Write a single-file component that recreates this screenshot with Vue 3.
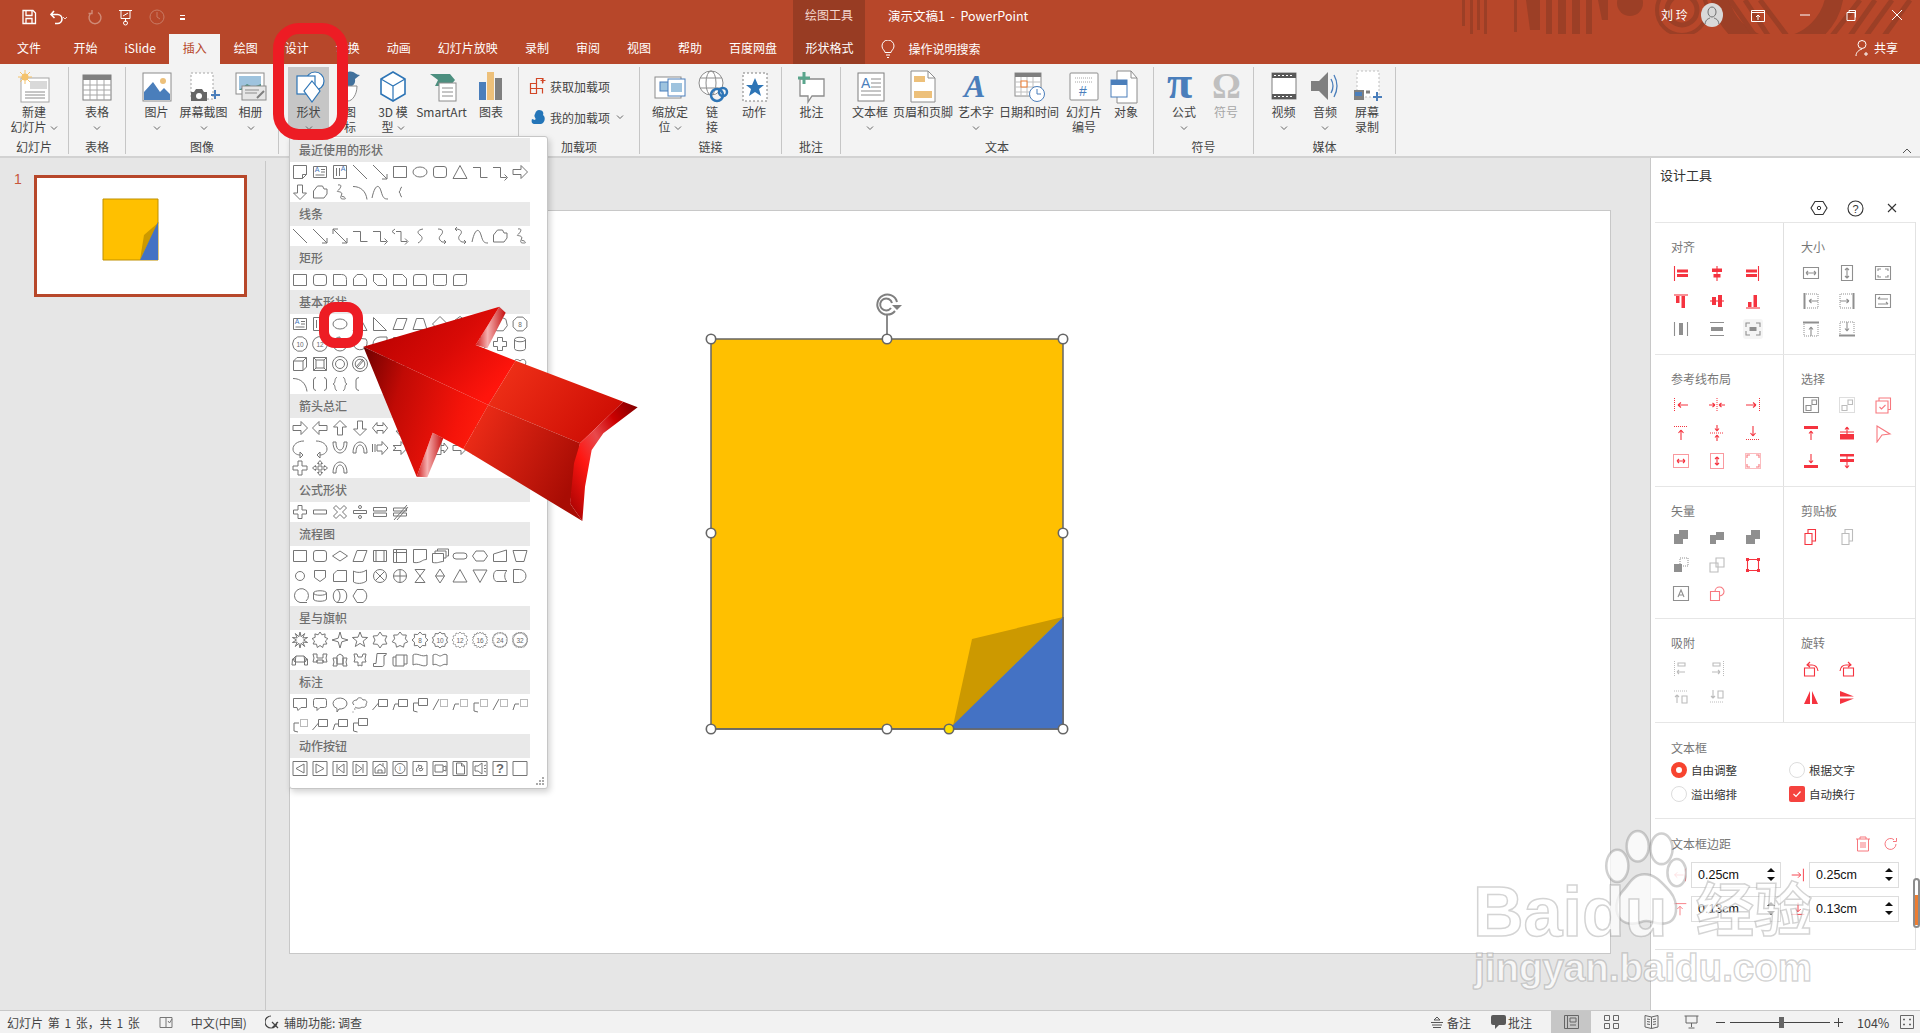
<script setup>
// regular polygon / star paths for the shape gallery
const poly = (n, rx = 7.5, ry = 7.5, rot = -90) => {
  let p = []
  for (let i = 0; i < n; i++) {
    const a = ((rot + (360 / n) * i) * Math.PI) / 180
    p.push((10 + rx * Math.cos(a)).toFixed(1) + ' ' + (10 + ry * Math.sin(a)).toFixed(1))
  }
  return 'M' + p.join('L') + 'z'
}
const star = (n, r = 4.5, R = 8) => {
  let p = []
  for (let i = 0; i < n * 2; i++) {
    const a = ((-90 + (180 / n) * i) * Math.PI) / 180
    const q = i % 2 ? r : R
    p.push((10 + q * Math.cos(a)).toFixed(1) + ' ' + (10 + q * Math.sin(a)).toFixed(1))
  }
  return 'M' + p.join('L') + 'z'
}
const ell = (rx, ry, cx = 10, cy = 10) => `M${cx - rx} ${cy}a${rx} ${ry} 0 1 0 ${rx * 2} 0a${rx} ${ry} 0 1 0 ${-rx * 2} 0z`

const S = {
  rect: 'M3.5 4.5h13v11h-13z',
  note: 'M3.5 3.5h13v9l-4 4h-9zM16.5 12.5h-4v4',
  tb: 'M3.5 4.5h13v11h-13zM11 7.5h4M11 10h4M5.5 13h9',
  vt: 'M3.5 3.5h13v13h-13zM6.5 6v8M9.5 6v8',
  line: 'M3 3l14 14',
  arr: 'M3 3l14 14m-5 0h5v-5',
  dbl: 'M3 3l14 14m-5 0h5v-5M3 8V3h5',
  elbow: 'M3 5.5h7.5v10h7',
  elbowA: 'M3 5.5h7.5v10h6m-2-3l3 3-3 3',
  elbowD: 'M6 5.5h5v10h6m-2-3l3 3-3 3M5 3L2 5.5 5 8',
  oval: ell(7, 5),
  round: 'M6 4.5h8q2.5 0 2.5 2.5v6q0 2.5-2.5 2.5H6q-2.5 0-2.5-2.5V7q0-2.5 2.5-2.5z',
  tri: 'M10 3.5l7 13H3z',
  aR: 'M3 7.5h8V3.5l6.5 6.5-6.5 6.5v-4H3z',
  aL: 'M17 7.5H9V3.5L2.5 10 9 16.5v-4h8z',
  aU: 'M7.5 17V9H3.5L10 2.5 16.5 9h-4v8z',
  aD: 'M7.5 3v8H3.5l6.5 6.5 6.5-6.5h-4V3z',
  free: 'M3.5 16V9l4-5h5l1.5 3h3v5l-3 4z',
  scrib: 'M8 3c6-1 1 5-.5 6s6 0 4 4 0 4 3 4-2-4-3-2',
  arc: 'M3 4.5c8 0 13 5 14 13',
  curve: 'M2 16C5 2 9 2 11 9s3 8 7 8',
  brace: 'M12 5c-2 0-1 4-3 5 2 1 1 5 3 5',
  sc: 'M13 3C7 4 7 7 10 9s3 5-2 8',
  sca: 'M8 3c6 0 5 4 3 6s-3 4 1 7h4m-2-2l2 2-2 2',
  scd: 'M7 1L5 3l2 2M5 3c8 0 7 4 5 6s-2 5 2 7h4m-2-2l2 2-2 2',
  r3: 'M3.5 4.5h8q5 0 5 5v6h-13z',
  r4: 'M7 4.5h6l3.5 4v7h-13v-7z',
  r5: 'M3.5 4.5h9l4 4v7h-9l-4-4z',
  r6: 'M3.5 4.5h9l4 4v7h-13z',
  r7: 'M6 4.5h8q2.5 0 2.5 2.5v8.5h-13V7q0-2.5 2.5-2.5z',
  r8: 'M3.5 4.5h13v9q0 2-2 2h-9q-2 0-2-2z',
  r9: 'M6 4.5h10.5v8q0 3-3 3H3.5V7q0-2.5 2.5-2.5z',
  rtri: 'M3.5 3.5l13 13h-13z',
  para: 'M7 4.5h10l-4 11H3z',
  trap: 'M6.5 4.5h7l3.5 11H3z',
  dia: 'M10 2.5l7.5 7.5-7.5 7.5L2.5 10z',
  pie: 'M10 10V3a7 7 0 1 0 7 7z',
  chord: 'M5 4a7 7 0 1 0 11 1z',
  tear: 'M17 3v7a7 7 0 1 1-7-7z',
  frame: 'M3.5 3.5h13v13h-13zM6 6h8v8H6z',
  half: 'M3.5 3.5h13l-3 3h-7v7l-3 3z',
  lshape: 'M3.5 3.5h5v8h8v5h-13z',
  plus: 'M7.5 3.5h5v4h4v5h-4v4h-5v-4h-4v-5h4z',
  plaque: 'M7 3.5h6q0 3 3.5 3.5v6q-3.5 0-3.5 3.5H7q0-3.5-3.5-3.5V7Q7 7 7 3.5z',
  can: 'M4.5 5.5c0-3 11-3 11 0v9c0 3-11 3-11 0zM4.5 5.5c0 3 11 3 11 0',
  cube: 'M3.5 7l3.5-3.5h9.5V13L13 16.5H3.5zM3.5 7H13v9.5M13 7l3.5-3.5',
  bevel: 'M3.5 3.5h13v13h-13zM6 6h8v8H6zM3.5 3.5L6 6M16.5 3.5L14 6M3.5 16.5L6 14M16.5 16.5L14 14',
  donut: ell(7.5, 7.5) + ell(4.5, 4.5),
  no: ell(7.5, 7.5) + ell(4.8, 4.8) + 'M7 14l7-8M6 13l7-8',
  brk: 'M6 3.5Q3.5 4 3.5 6v8q0 2 2.5 2.5M14 3.5q2.5.5 2.5 2.5v8q0 2-2.5 2.5',
  brc: 'M7 3.5c-3 0-1 6-4 6.5 3 .5 1 6.5 4 6.5M13 3.5c3 0 1 6 4 6.5-3 .5-1 6.5-4 6.5',
  lbrk: 'M9 3.5Q6 4 6 6v8q0 2 3 2.5',
  heart: 'M10 17C0 10 5 2 10 7c5-5 10 3 0 10z',
  aLR: 'M2.5 10L7 4.5v3h6v-3l4.5 5.5-4.5 5.5v-3H7v3z',
  aUD: 'M10 2.5l4 4.5h-2.5v6H14l-4 4.5L6 13h2.5V7H6z',
  aQuad: 'M10 2.5l2.5 3H11V9h3.500V7.500l3 2.500-3 2.500V11H11v3.500h1.500l-2.500 3-2.500-3H9V11H5.500v1.500l-3-2.500 3-2.500V9H9V5.500H7.500z',
  aCross: 'M8 3h4v5h5v4h-5v5H8v-5H3V8h5z',
  aCrn: 'M4 10a6 6 0 0 1 12 0M16 10l-3-1M16 10l1-3M4 10v6h3v-6a3 3 0 0 1 6 0',
  aCurL: 'M14 3c-7 0-11 4-11 8s4 6 7 6M10 14v6l3-3z',
  aCurR: 'M6 3c7 0 11 4 11 8s-4 6-7 6M10 14v6l-3-3z',
  aUT: 'M3 4c0 8 4 11 7 11s7-3 7-11h-3c0 6-2 8-4 8S6 10 6 4z',
  aUTd: 'M3 15c0-8 4-11 7-11s7 3 7 11h-3c0-6-2-8-4-8s-4 2-4 8z',
  aStr: 'M2.5 6v8M5 6v8M7 7h5V3.500l6 6.500-6 6.500V13H7z',
  aNot: 'M3 7.500h8V3.500l6.500 6.500-6.500 6.500v-4H3l3-2.500z',
  aPen: 'M3.500 4.500h8l5 5.500-5 5.500h-8z',
  aBox: 'M3 3.500h8v13H3zM11 7.500h3V5l4 5-4 5v-2.500h-3',
  mPlus: 'M8 3.500h4V8h4.500v4H12v4.500H8V12H3.500V8H8z',
  mMin: 'M3.500 8h13v4h-13z',
  mMul: 'M6 3.500l4 4 4-4 2.500 2.500-4 4 4 4L14 16.500l-4-4-4 4L3.500 14l4-4-4-4z',
  mDiv: 'M3.500 8.500h13v3h-13z' + ell(1.5, 1.5, 10, 5) + ell(1.5, 1.5, 10, 15),
  mEq: 'M3.500 5.500h13v3.500h-13zM3.500 11h13v3.500h-13z',
  mNe: 'M3.500 6h13v3h-13zM3.500 11h13v3h-13zM4 18L17 3M7 18L18 5',
  fDec: 'M2.500 10L10 5l7.500 5-7.500 5z',
  fPre: 'M3.500 4.500h13v11h-13zM6 4.500v11M14 4.500v11',
  fInt: 'M3.500 3.500h13v13h-13zM3.500 6.500h13M6.500 3.500v13',
  fDoc: 'M3.500 3.500h13v10c-5 0-5 4-13 3z',
  fMul: 'M2.500 7.500h11v8c-4 0-5 2-11 1zM5 7.500V5h11v7h-2.500M7.500 5V3h11v7h-2',
  fTerm: 'M6 7h8a3 3 0 0 1 0 6H6a3 3 0 0 1 0-6z',
  fPrep: 'M6 5h8l3.500 5-3.500 5H6l-3.500-5z',
  fMan: 'M3.500 8l13-4v11.500h-13z',
  fOp: 'M3 4.500h14l-3 11H6z',
  fOff: 'M4.500 4.500h11v7L10 15.500l-5.500-4z',
  fCard: 'M7 4.500h9.500v11h-13V8z',
  fTape: 'M3.500 5c3 2 9 2 13-1v11c-4 3-10 3-13 1z',
  fSum: ell(6.5, 6.5) + 'M5.500 5.500l9 9M14.500 5.500l-9 9',
  fOr: ell(6.5, 6.5) + 'M10 3.500v13M3.500 10h13',
  fCol: 'M5 3.500h10L5 16.500h10z',
  fSort: 'M10 3l4.500 7-4.500 7-4.500-7zM5.500 10h9',
  fTri: 'M10 3.500l7 12.500H3z',
  fInv: 'M3 4l7 12.500L17 4z',
  fSto: 'M6.500 4.500H17c-3 2-3 9 0 11H6.500c-4-1-4-10 0-11z',
  fDel: 'M3.500 3.500h6a6.500 6.500 0 0 1 0 13h-6z',
  fSeq: 'M16 15a7 7 0 1 0-6 1.500h7',
  fDisk: 'M3.500 7c0-3 13-3 13 0v6c0 3-13 3-13 0zM3.500 7c0 3 13 3 13 0',
  fDir: 'M7 3.500c-5 2-5 11 0 13h6c5-2 5-11 0-13zM7 3.500c4 2 4 11 0 13',
  fDisp: 'M7 3.500h6c5 3 5 10 0 13H7L3 10z',
  rib1: 'M6 6h8l1 6H5zM6 6L3 9l2 3M14 6l3 3-2 3M2.500 9h3v6H2zM14.500 9h3v6h-3z',
  rib2: 'M3 4h4v4h6V4h4l-1 4 1 4h-4v-2H7v2H3l1-4zM7 10v3h6v-3',
  rib3: 'M7 6l3-2 3 2v8H7zM3 8h4v8H3l1-4zM13 8h4l-1 4 1 4h-4z',
  rib4: 'M4 4h3l1 3h4l1-3h3l-1 5 1 3h-4v4l-2-1-2 1v-4H4l1-3z',
  scr1: 'M7 3.500h9.500l-1 2H14v9c0 2-2 2-2 2H3.500v-3H6z',
  scr2: 'M3 7h3V5h11v9h-3v2H4q-1 0-1-2zM6 7v9M14 5v9',
  wave: 'M3 5c4-3 9 3 14 0v10c-4 3-9-3-14 0z',
  dwave: 'M3 5c4-2 5 1 7 1s4-3 7-1v10c-3-2-5 1-7 1s-4-3-7-1z',
  c1: 'M3.500 4.500h13v9H11l-3 3-1-3H3.500z',
  c2: 'M5.500 4.500h9q2 0 2 2v5q0 2-2 2H10l-3 3v-3H5.500q-2 0-2-2v-5q0-2 2-2z',
  c3: 'M3 9.500a7 5.500 0 1 1 6 5.500l-2 3v-3.500Q3 13 3 9.500z',
  c4: 'M4 11c-3-3 0-5 3-5 0-3 5-3 6 0 3-1 5 2 3 4 1 3-3 4-4 3-2 2-6 1-7 0M4 15h1.500M2.500 18h1',
  cl1: 'M8.500 5.500h9v7h-9zM8.500 9L2.500 16',
  cl2: 'M8.500 5.500h9v7h-9zM8.500 10H5L3 16',
  cl3: 'M8.500 4.500h9v7h-9zM8.500 9H3.500v8l4 1',
  act: 'M3 3.500h14v14H3z',
}
const names = (str) => str.split(' ').map((k) => ({ d: S[k] }))
const gTB = { d: S.tb, t: 'A', c: '#3f74b8', tx: 7, ty: 10 }
const gVT = { d: S.vt, t: 'A', c: '#3f74b8', tx: 13, ty: 9 }
const numOct = (n, t) => ({ d: poly(n, 7.5, 7.5, -90 + 180 / n), t })
const dotBox = 'M10.500 5.500h7v7h-7z'
const sec = [
  { h: '最近使用的形状', items: [{ d: S.note }, gTB, gVT, ...names('line arr rect oval round tri elbow elbowA aR aD free scrib arc curve brace')] },
  { h: '线条', items: names('line arr dbl elbow elbowA elbowD sc sca scd curve free scrib') },
  { h: '矩形', items: names('rect round r3 r4 r5 r6 r7 r8 r9') },
  { h: '基本形状', items: [gTB, gVT, ...names('oval tri rtri para trap dia'), { d: poly(5) }, { d: poly(6, 7.5, 6.5, 0) }, { d: poly(7) }, numOct(8, '8'), numOct(10, '10'), numOct(12, '12'), ...names('pie chord tear frame half lshape rect plaque plus can cube bevel donut no tear plus rect oval round arc free heart arc brk brc lbrk brace brk brc')] },
  { h: '箭头总汇', items: names('aR aL aU aD aLR aUD aQuad aCross aCrn aUT aStr aNot aCurL aCurR aUT aUTd aStr aNot aPen aBox aR aBox aCross aQuad aCross aQuad aUTd') },
  { h: '公式形状', items: names('mPlus mMin mMul mDiv mEq mNe') },
  { h: '流程图', items: names('rect round fDec para fPre fInt fDoc fMul fTerm fPrep fMan fOp').concat([{ d: ell(4.5, 4.5) }], names('fOff fCard fTape fSum fOr fCol fSort fTri fInv fSto fDel fSeq fDisk fDir fDisp')) },
  { h: '星与旗帜', items: [{ d: star(10, 3.5, 8) }, { d: star(9, 5.5, 8) }, { d: star(4, 2.5, 8) }, { d: star(5, 3.4, 8) }, { d: star(6, 5, 8) }, { d: star(7, 5.5, 8) }, { d: star(8, 6, 8), t: '8' }, { d: star(10, 6.5, 8), t: '10' }, { d: star(12, 6.5, 8), t: '12', dash: 1 }, { d: star(16, 6.5, 8), t: '16', dash: 1 }, { d: star(24, 6.5, 8), t: '24', dash: 1 }, { d: star(32, 6.5, 8), t: '32', dash: 1 }, ...names('rib1 rib2 rib3 rib4 scr1 scr2 wave dwave')] },
  { h: '标注', items: [...names('c1 c2 c3 c4 cl1 cl2 cl3'), { d: 'M3 16L9 5', e: dotBox }, { d: 'M3 16l2-6h4', e: dotBox }, { d: 'M9 9H4v8l4 1', e: dotBox }, { d: 'M3 16L9 5', e: dotBox }, { d: 'M3 16l2-6h4', e: dotBox }, { d: 'M9 9H4v8l4 1', e: dotBox }, ...names('cl1 cl2 cl3')] },
  { h: '动作按钮', items: [{ d: S.act + 'M14 6l-8 4.500 8 4.500z' }, { d: S.act + 'M6 6l8 4.500L6 15z' }, { d: S.act + 'M14 6l-6 4.500 6 4.500zM7 6v9' }, { d: S.act + 'M6 6l6 4.500L6 15zM13 6v9' }, { d: S.act + 'M5 15v-5l5-4 5 4v5zM8 15v-3h4v3M13 5v3' }, { d: S.act + ell(5, 5, 10, 10.5), t: 'i' }, { d: S.act + 'M7 14q-2-4 2-5l-1-2 4 1-1 3-1-1q-2 1 0 3 3 0 3-3' }, { d: S.act + 'M5 7h8v7H5zM13 9l3-1v5l-3-1' }, { d: S.act + 'M6.500 5h5l3 3v8h-8zM11.500 5v3h3' }, { d: S.act + 'M5 8h3l4-3v11l-4-3H5zM14 8l2-1M14 10.500h2M14 13l2 1' }, { d: S.act, t: '?', big: 1 }, { d: S.act }] },
]

// ribbon icons, drawn in a 36x32 box
const blue = '#4a7ebb', tan = '#edc07a'
const icons = {
  newSlide: `<rect x="5" y="8" width="28" height="24" fill="#fff" stroke="#a6a6a6"/><rect x="14" y="11" width="17" height="8" fill="#d9d9d9"/><path d="M9 22h20M9 25h20M9 28h20" stroke="#8c8c8c"/><circle cx="9" cy="7" r="3.500" fill="#f4c26b"/><path d="M9 0v14M2 7h14M4 2l10 10M14 2L4 12" stroke="#f4c26b"/>`,
  table: `<rect x="4" y="5" width="28" height="25" fill="#fff" stroke="#7f7f7f"/><rect x="4" y="5" width="28" height="5" fill="#7f7f7f"/><path d="M4 15h28M4 20h28M4 25h28M11 10v20M18 10v20M25 10v20" stroke="#a6a6a6"/>`,
  pic: `<rect x="4" y="3" width="28" height="28" fill="#fff" stroke="#8c8c8c"/><circle cx="24" cy="11" r="3" fill="${tan}"/><path d="M5 30V22l9-10 7 10 4-4 6 6v6z" fill="${blue}"/>`,
  shot: `<rect x="5" y="3" width="22" height="26" fill="#fff" stroke="#a6a6a6" stroke-dasharray="2 2"/><path d="M5 22h3l2-3h6l2 3h3v9H5z" fill="#666"/><circle cx="13" cy="26" r="3" fill="#fff"/><path d="M29 20v9M25 25h9" stroke="${blue}" stroke-width="2"/>`,
  album: `<rect x="3" y="3" width="28" height="21" fill="#fff" stroke="#8c8c8c"/><path d="M6 6h22v14H6z" fill="#9ec3de"/><path d="M6 20l8-6 6 3 8-3v6z" fill="#4c8f7f"/><rect x="9" y="16" width="24" height="14" fill="#e6e6e6" stroke="#8c8c8c"/><path d="M12 20h14M12 23h12" stroke="#8c8c8c"/><path d="M24 28l7-7" stroke="#7f7f7f" stroke-width="2"/>`,
  shape: `<circle cx="24" cy="11" r="9" fill="#fff" stroke="#2e75b6" stroke-width="1.200"/><rect x="6" y="6" width="18" height="18" fill="#fff" stroke="#2e75b6" stroke-width="1.200"/><path d="M21 11l8 10-8 11-8-11z" fill="#fff" stroke="#2e75b6" stroke-width="1.200"/>`,
  iconset: `<path d="M16 2c6-2 7 3 12 3l-5 4c1 6-4 9-9 7-2-4 0-10 2-14z" fill="#41719c"/><path d="M9 16h16c0 9-5 15-9 15-5 0-7-8-7-15z" fill="#fff" stroke="#8c8c8c"/><path d="M15 20v10" stroke="#8c8c8c"/>`,
  model: `<path d="M18 2l12 7v15L18 31 6 24V9z" fill="#fff" stroke="#2e75b6" stroke-width="1.600"/><path d="M6 9l12 7 12-7M18 16v15" fill="none" stroke="#2e75b6" stroke-width="1.200"/>`,
  smart: `<path d="M6 4h20l5 6-5 6H11l3-6z" fill="#4c8f7f"/><rect x="15" y="13" width="17" height="18" fill="#fff" stroke="#8c8c8c"/><path d="M18 18h11M18 22h11M18 26h11" stroke="#8c8c8c"/>`,
  chart: `<rect x="6" y="12" width="7" height="18" fill="#4a7ebb"/><rect x="14" y="2" width="7" height="28" fill="${tan}"/><rect x="22" y="8" width="7" height="22" fill="#7f7f7f"/>`,
  zoom: `<rect x="3" y="7" width="26" height="21" fill="#fff" stroke="#8c8c8c"/><rect x="8" y="12" width="9" height="9" fill="#9ec3de" stroke="${blue}"/><rect x="16" y="9" width="17" height="17" fill="#fff" stroke="${blue}"/><rect x="19" y="13" width="11" height="9" fill="#9ec3de"/>`,
  link: `<circle cx="17" cy="13" r="12" fill="#fff" stroke="#8c8c8c"/><ellipse cx="17" cy="13" rx="5" ry="12" fill="none" stroke="#8c8c8c"/><path d="M6 8h22M6 18h22" stroke="#8c8c8c"/><circle cx="23" cy="25" r="6" fill="none" stroke="#2e75b6" stroke-width="2.500"/><circle cx="29" cy="22" r="4" fill="none" stroke="#2e75b6" stroke-width="2.500"/>`,
  action: `<rect x="7" y="3" width="24" height="28" fill="#fff" stroke="#7f7f7f" stroke-dasharray="2 2"/><path d="M19 8l3 7h6l-5 4 2 7-6-4-6 4 2-7-5-4h6z" fill="#2e75b6"/>`,
  comment: `<path d="M6 9h24v17H18l-4 6v-6H6z" fill="#fff" stroke="#8c8c8c" stroke-width="1.300"/><path d="M10 2v12M4 8h12" stroke="#5aa58c" stroke-width="3"/>`,
  textbox: `<rect x="6" y="3" width="26" height="28" fill="#fff" stroke="#7f7f7f"/><text x="9" y="18" font-size="14" fill="${blue}" font-family="Liberation Sans">A</text><path d="M19 9h10M19 13h10M19 17h10M9 21h20M9 25h20" stroke="#8c8c8c"/>`,
  hf: `<path d="M6 1h17l7 7v24H6z" fill="#fff" stroke="#8c8c8c"/><path d="M23 1v7h7" fill="none" stroke="#8c8c8c"/><rect x="9" y="6" width="11" height="6" fill="${tan}"/><rect x="9" y="21" width="18" height="7" fill="${tan}"/>`,
  art: `<text x="6" y="27" font-size="32" font-style="italic" font-weight="700" fill="#4a7ebb" font-family="Liberation Serif">A</text>`,
  date: `<rect x="4" y="3" width="26" height="23" fill="#fff" stroke="#8c8c8c"/><rect x="4" y="3" width="26" height="4" fill="#7f7f7f"/><path d="M4 12h26M4 17h26M4 22h26M10 7v19M16 7v19M22 7v19" stroke="#bfbfbf"/><rect x="10" y="11" width="6" height="6" fill="#fff" stroke="#ed7d31"/><circle cx="26" cy="24" r="7.500" fill="#fff" stroke="${blue}"/><path d="M26 19v5h4" fill="none" stroke="${blue}"/>`,
  num: `<rect x="4" y="3" width="28" height="27" rx="1" fill="#fff" stroke="#8c8c8c"/><path d="M9 8h18M9 12h18" stroke="#a6a6a6" stroke-dasharray="1 1"/><text x="13" y="26" font-size="14" font-family="Liberation Sans" fill="${blue}">#</text>`,
  obj: `<path d="M9 1h14l6 7v25H9z" fill="#fff" stroke="#8c8c8c"/><path d="M23 1v7h6" fill="none" stroke="#8c8c8c"/><rect x="3" y="10" width="16" height="17" fill="#fff" stroke="${blue}"/><rect x="3" y="10" width="16" height="5" fill="${blue}"/>`,
  pi: `<text x="1" y="28" font-size="46" font-weight="700" fill="#4a7ebb" font-family="Liberation Serif">π</text>`,
  omega: `<text x="4" y="28" font-size="36" font-weight="700" fill="#bfbfbf" font-family="Liberation Serif">Ω</text>`,
  video: `<rect x="6" y="3" width="24" height="26" fill="#fff" stroke="#7f7f7f"/><path d="M6 3h24v5H6zM6 24h24v5H6z" fill="#595959"/><path d="M8 5.500h20M8 26.500h20" stroke="#fff" stroke-dasharray="2 2"/>`,
  audio: `<path d="M4 11h8l9-9v28l-9-9H4z" fill="#7f7f7f"/><path d="M24 9q4 7 0 14M27 5q6 11 0 22" fill="none" stroke="${blue}" stroke-width="1.300"/>`,
  rec: `<rect x="8" y="1" width="22" height="26" fill="#fff" stroke="#bfbfbf" stroke-dasharray="2 2"/><rect x="5" y="20" width="10" height="10" fill="#7f7f7f"/><rect x="6" y="22" width="7" height="4" fill="${blue}"/><path d="M17 22h4" stroke="#7f7f7f" stroke-width="3"/><path d="M28 22v9M24 27h9" stroke="${blue}" stroke-width="2"/>`,
}

const groups = [
  { name: '幻灯片', w: 69, pad: 0, btns: [{ ic: 'newSlide', w: 68, lines: ['新建', '幻灯片'], chev: 1 }] },
  { name: '表格', w: 57, pad: 0, btns: [{ ic: 'table', w: 56, lines: ['表格'], chev: 1 }] },
  { name: '图像', w: 153, pad: 7, btns: [{ ic: 'pic', w: 47, lines: ['图片'], chev: 1 }, { ic: 'shot', w: 47, lines: ['屏幕截图'], chev: 1 }, { ic: 'album', w: 47, lines: ['相册'], chev: 1 }] },
  { name: '', w: 240, pad: 9, btns: [{ ic: 'shape', w: 41, lines: ['形状'], chev: 1, on: 1 }, { ic: 'iconset', w: 42, lines: ['图', '标'] }, { ic: 'model', w: 44, lines: ['3D 模', '型'], chev: 1 }, { ic: 'smart', w: 53, lines: ['SmartArt'] }, { ic: 'chart', w: 46, lines: ['图表'] }] },
  { name: '加载项', w: 121, addin: 1 },
  { name: '链接', w: 142, pad: 9, btns: [{ ic: 'zoom', w: 42, lines: ['缩放定', '位'], chev: 1 }, { ic: 'link', w: 42, lines: ['链', '接'] }, { ic: 'action', w: 42, lines: ['动作'] }] },
  { name: '批注', w: 59, pad: 0, btns: [{ ic: 'comment', w: 59, lines: ['批注'] }] },
  { name: '文本', w: 313, pad: 9, btns: [{ ic: 'textbox', w: 40, lines: ['文本框'], chev: 1 }, { ic: 'hf', w: 66, lines: ['页眉和页脚'] }, { ic: 'art', w: 40, lines: ['艺术字'], chev: 1 }, { ic: 'date', w: 66, lines: ['日期和时间'] }, { ic: 'num', w: 44, lines: ['幻灯片', '编号'] }, { ic: 'obj', w: 40, lines: ['对象'] }] },
  { name: '符号', w: 100, pad: 9, btns: [{ ic: 'pi', w: 42, lines: ['公式'], chev: 1 }, { ic: 'omega', w: 42, lines: ['符号'], off: 1 }] },
  { name: '媒体', w: 142, pad: 9, btns: [{ ic: 'video', w: 41, lines: ['视频'], chev: 1 }, { ic: 'audio', w: 42, lines: ['音频'], chev: 1 }, { ic: 'rec', w: 42, lines: ['屏幕', '录制'] }] },
]

const tabs = ['开始', 'iSlide', '插入', '绘图', '设计', '切换', '动画', '幻灯片放映', '录制', '审阅', '视图', '帮助', '百度网盘']

// design pane icons: colour, filled path, stroked path, dotted path
const red = '#f5333f', pink = '#f7787f', g1 = '#8f8f8f', g2 = '#bcbcbc'
const paneL = [
  { h: '对齐', items: [
    [red, 'M6 6.500h11v3H6zM6 11h11v3H6z', 'M3.500 3v15'],
    [red, 'M5 5.500h10v3.500H5zM6.500 11h7v3.500h-7z', 'M10 3v15'],
    [red, 'M3 6.500h11v3H3zM3 11h11v3H3z', 'M15.500 3v15'],
    [red, 'M5 5h3.500v7H5zM10.500 5H14v12h-3.500z', 'M3 4h14'],
    [red, 'M5 6h4v8H5zM11 4h4v12h-4z', 'M3 10h14'],
    [red, 'M5 11h3.500v5H5zM10.500 4H14v12h-3.500z', 'M3 17h14'],
    [g1, 'M8 4h4v12H8z', 'M3.500 3v14M16.500 3v14'],
    [g1, 'M4 8h12v4H4z', 'M3 3.500h14M3 16.500h14'],
    [g1, 'M6.500 8h7v4h-7z', 'M7 4H3v4M13 4h4v4M3 12v4h4M17 12v4h-4', '', 1],
  ] },
  { h: '参考线布局', items: [
    [red, '', 'M7 10h10M7 10l3-2.500M7 10l3 2.500', 'M3.500 3v14'],
    [red, '', 'M2 10h6M8 10L5.500 8M8 10l-2.500 2M18 10h-6M12 10l2.500-2M12 10l2.500 2', 'M10 3v14'],
    [red, '', 'M3 10h10M13 10l-3-2.500M13 10l-3 2.500', 'M16.500 3v14'],
    [red, '', 'M10 7v10M10 7L7.500 10M10 7l2.500 3', 'M3 3.500h14'],
    [red, '', 'M10 2v6M10 8L8 5.500M10 8l2-2.500M10 18v-6M10 12l-2 2.500M10 12l2 2.500', 'M3 10h14'],
    [red, '', 'M10 3v10M10 13l-2.500-3M10 13l2.500-3', 'M3 16.500h14'],
    [red, '', 'M6 10h8M6 10l2-2M6 10l2 2M14 10l-2-2M14 10l-2 2', 'M2.500 3.500h15v13h-15z'],
    [red, '', 'M10 6v8M10 6L8 8M10 6l2 2M10 14l-2-2M10 14l2-2', 'M3.500 2.500h13v15h-13z'],
    [pink, '', 'M7 4H4v3M13 4h3v3M4 13v3h3M16 13v3h-3', 'M2.500 2.500h15v15h-15z'],
  ] },
  { h: '矢量', items: [
    [g1, 'M3 7h5V3h9v9h-5v5H3z', ''],
    [g1, 'M3 8h6v9H3zM9 5h8v8H9zM9 8h3v5H9z', ''],
    [g1, 'M3 8h5v9H3zM8 3h9v9H8zM10 5h5v5h-5z M8 12h4v5H8z', ''],
    [g1, 'M3 9h8v8H3z', '', 'M9 3h8v8H9z'],
    [g2, '', 'M3 8h8v9H3zM9 3h8v9H9z', ''],
    [red, 'M3 3h3v3H3zM14 3h3v3h-3zM3 14h3v3H3zM14 14h3v3h-3z', 'M5 4.500h10M5 15.500h10M4.500 5v10M15.500 5v10'],
    [g1, '', 'M2.500 3.500h15v14h-15zM7 14l3-7 3 7M8 12h4'],
    [pink, '', 'M3.500 8.500h9v9h-9zM8 8.500A4.500 4.500 0 1 1 12.500 13'],
  ] },
  { h: '吸附', items: [
    [g2, '', 'M7 4h7v3H7zM14 13H6M6 13l2-2M6 13l2 2', 'M3.500 2v16'],
    [g2, '', 'M6 4h7v3H6zM5 13h8M13 13l-2-2M13 13l-2 2', 'M16.500 2v16'],
    [g2, '', 'M6 8v8M6 8L4 10M6 8l2 2M11 9h5v7h-5z', 'M3 4h14'],
    [g2, '', 'M6 3v8M6 11L4 9M6 11l2-2M11 4h5v7h-5z', 'M3 15h14'],
  ] },
]
const paneR = [
  { h: '大小', items: [
    [g1, '', 'M2.500 4.500h15v11h-15zM5 10h10M5 10l2-2M5 10l2 2M15 10l-2-2M15 10l-2 2'],
    [g1, '', 'M4.500 2.500h11v15h-11zM10 5v10M10 5L8 7M10 5l2 2M10 15l-2-2M10 15l2-2'],
    [g1, '', 'M2.500 3.500h15v13h-15zM5 8V6h3M12 6h3v2M5 12v2h3M12 14h3v-2'],
    [g1, 'M2.500 2h2v16h-2z', 'M8 10h9M8 10l2.500-2M8 10l2.500 2', 'M5 3h12v14H5'],
    [g1, 'M15.500 2h2v16h-2z', 'M3 10h9M12 10L9.500 8M12 10l-2.500 2', 'M15 3H3v14h12'],
    [g1, '', 'M2.500 3.500h15v13h-15zM5 8h10M5 8l2-2M5 13h10M15 13l-2-2'],
    [g1, 'M2 2.500h16v2H2z', 'M10 8v9M10 8L8 10.500M10 8l2 2.500', 'M3 5v12h14V5'],
    [g1, 'M2 15.500h16v2H2z', 'M10 3v9M10 12l-2-2.500M10 12l2-2.500', 'M3 15V3h14v12'],
  ] },
  { h: '选择', items: [
    [g1, '', 'M2.500 2.500h15v15h-15zM5 10.500h5v5H5zM11 5h4.500v4.500H11z'],
    [g2, '', 'M5 10.500h5v5H5zM11 5h4.500v4.500H11z', 'M2.500 2.500h15v15h-15z'],
    [pink, '', 'M3 6h12v12H3zM6 6V3h11.500v11.500H15M6.500 12l2 2 4-4'],
    [red, 'M3 3h14v3H3z', 'M10 17V8M10 8L8 10.500M10 8l2 2.500'],
    [red, 'M3 11h14v5.500H3z', 'M10 11V4M10 4L8 6.500M10 4l2 2.500M3 9h14'],
    [pink, '', 'M4 3l13 8-8 1-5 7z'],
    [red, 'M3 14h14v3H3z', 'M10 3v9M10 12l-2-2.500M10 12l2-2.500'],
    [red, 'M3 3h14v2.500H3zM3 8h14v3H3z', 'M10 5v12M10 17l-2-2.500M10 17l2-2.500'],
  ] },
  { h: '剪贴板', items: [
    [red, '', 'M4 6.500h7v11H4zM7 6V2.500h7.500V14H11'],
    [g2, '', 'M5 6.500h7v11H5zM8 6V2.500h7.500V14H12'],
  ] },
  { h: '旋转', items: [
    [red, '', 'M3.500 9h10v8h-10zM6 6h5q5 0 6 6M9 3L6 6l3 2'],
    [red, '', 'M6.500 9h10v8h-10zM14 6H9q-5 0-6 6M11 3l3 3-3 2'],
    [red, 'M9 4v13H3zM11 4v13h6z', ''],
    [red, 'M3 4l14 5.500H3zM3 11.500h14L3 17z', ''],
  ] },
]
const margins = [
  { v: '0.25cm', d: 'M14 10H4M4 10l3-3M4 10l3 3M16 3v14', c: pink },
  { v: '0.25cm', d: 'M3 10h10M13 10l-3-3M13 10l-3 3M16 3v14', c: red },
  { v: '0.13cm', d: 'M10 17V7M10 7L7 10M10 7l3 3M3 4h14', c: pink },
  { v: '0.13cm', d: 'M10 3v10M10 13l-3-3M10 13l3-3M3 16h14', c: red },
]
</script>

<template>
  <div class="app">
    <header class="titlebar">
      <svg class="deco" width="460" height="64" viewBox="1460 0 460 64">
        <g fill="#9c3f26">
          <path d="M1462 0h3v26h-3zM1470 0h3v38h-3zM1477 0h3v30h-3zM1484 0h3v58h-3zM1514 0h3v32h-3z" />
          <path d="M1526 0h14v30h-10zM1546 0h6v37h-6zM1558 0h8v37h-8zM1572 0h8v37h-8zM1586 0h6v34h-6zM1598 0h10v20h-6z" />
          <circle cx="1630" cy="3" r="13" />
        </g>
        <g fill="none" stroke="#9c3f26">
          <circle cx="1682" cy="10" r="25" stroke-width="4" />
          <circle cx="1682" cy="10" r="15" stroke-width="5" />
          <circle cx="1777" cy="-12" r="58" stroke-width="18" />
          <path d="M1730 0l32 46M1745 0l30 46M1760 0l30 40M1860 0l-36 46M1875 0l-32 46M1892 0l-26 36M1910 0l-26 36" stroke-width="5" />
        </g>
      </svg>
      <div class="qat">
        <svg width="16" height="16" viewBox="0 0 16 16" class="q1"><path d="M2 1.500h10l2.500 2.500v10.500h-12.500zM5 1.500v5h6v-5M5 14.500v-5h6v5" fill="none" stroke="#fff" stroke-width="1.300"/></svg>
        <svg width="18" height="16" viewBox="0 0 18 16" class="q2"><path d="M5 2L2 5.500 5.500 9M2.500 5.500h6a4.500 4.500 0 0 1 0 9H6" fill="none" stroke="#fff" stroke-width="1.600"/><path d="M14 8l2 2 2-2" fill="none" stroke="#f0d5cc"/></svg>
        <svg width="16" height="16" viewBox="0 0 16 16" class="q3"><path d="M11 3.500a6 6 0 1 1-6 0M5 1v3.500H1.500" fill="none" stroke="#d08c78" stroke-width="1.400"/></svg>
        <svg width="18" height="18" viewBox="0 0 18 18" class="q4"><path d="M2 2.500h13M4 2.500v8h9v-8M8.500 10.500V14M6 8l5-3" fill="none" stroke="#fff"/><circle cx="8.500" cy="15" r="2" fill="none" stroke="#fff"/></svg>
        <svg width="18" height="18" viewBox="0 0 18 18" class="q5"><circle cx="9" cy="9" r="7" fill="none" stroke="#c97b65"/><path d="M9 4v5l3 2" fill="none" stroke="#c97b65"/></svg>
        <span class="qmore"></span>
      </div>
      <div class="ctx">绘图工具</div>
      <div class="doc">演示文稿1&nbsp; -&nbsp; PowerPoint</div>
      <div class="user">刘 玲</div>
      <svg class="avatar" width="22" height="24" viewBox="0 0 22 24"><ellipse cx="11" cy="12" rx="11" ry="12" fill="#d9d9d9"/><ellipse cx="11" cy="9" rx="4" ry="5" fill="none" stroke="#6e6e6e"/><path d="M4 21c1-5 3-5 5-6M18 21c-1-5-3-5-5-6" fill="none" stroke="#6e6e6e"/></svg>
      <svg class="winbtn w1" width="14" height="14" viewBox="0 0 14 14"><path d="M.5 2.500h13v11H.5zM.5 4.500h13M7 12V7M5 9l2-2 2 2" fill="none" stroke="#fff"/></svg>
      <svg class="winbtn w2" width="14" height="14" viewBox="0 0 14 14"><path d="M2 7h10" stroke="#fff"/></svg>
      <svg class="winbtn w3" width="14" height="14" viewBox="0 0 14 14"><path d="M3 4.500h8v8H3zM5 4.500v-2h6.500v7" fill="none" stroke="#fff"/></svg>
      <svg class="winbtn w4" width="14" height="14" viewBox="0 0 14 14"><path d="M2 2l10 10M12 2L2 12" stroke="#fff"/></svg>
    </header>

    <nav class="tabs">
      <div class="tab first">文件</div>
      <div v-for="t in tabs" :key="t" class="tab" :class="{ active: t === '插入' }">{{ t }}</div>
      <div class="tab ctxtab">形状格式</div>
      <svg class="bulb" width="14" height="19" viewBox="0 0 14 19"><path d="M4 12.500c0-2-3-3-3-6.500a6 6 0 0 1 12 0c0 3.500-3 4.500-3 6.500zM5 15h4M6 17.500h2" fill="none" stroke="#fff"/></svg>
      <div class="tell">操作说明搜索</div>
      <div class="share">
        <svg width="16" height="18" viewBox="0 0 16 18"><circle cx="7" cy="5.500" r="4" fill="none" stroke="#fff"/><path d="M1 17c0-4 3-6 6-7M11 13v4M9 15h4" fill="none" stroke="#fff"/></svg>
        共享
      </div>
    </nav>

    <section class="ribbon">
      <div v-for="(g, gi) in groups" :key="gi" class="group" :style="{ width: g.w + 'px' }">
        <div v-if="g.addin" class="addins">
          <div class="addin">
            <svg width="18" height="18" viewBox="0 0 18 18"><path d="M1.500 6.500h6v5h-6zM7.500 6.500v-5h6v5M1.500 11.500v5h6v-5M7.500 11.500h6v5" fill="none" stroke="#d24726" stroke-width="1.200"/><path d="M14 1v5M11.500 3.500h5" stroke="#d24726"/></svg>
            <span>获取加载项</span>
          </div>
          <div class="addin">
            <svg width="18" height="18" viewBox="0 0 18 18"><path d="M10 2c4 0 5 3 4 5 3 2 2 8-2 9H6c-3 0-4-2-3-5l3 1c2-2-2-3 0-6 1-3 2-4 4-4z" fill="#2475b8"/></svg>
            <span>我的加载项</span>
            <svg class="chev" width="8" height="6" viewBox="0 0 8 6"><path d="M1 1.500l3 3 3-3" fill="none" stroke="#666"/></svg>
          </div>
        </div>
        <div v-else class="btns" :style="{ paddingLeft: g.pad + 'px' }">
          <div v-for="b in g.btns" :key="b.ic" class="btn" :class="{ on: b.on, off: b.off }" :style="{ width: b.w + 'px' }">
            <svg class="bicon" width="36" height="32" viewBox="0 0 36 32" v-html="icons[b.ic]"></svg>
            <span v-for="(l, i) in b.lines" :key="i" class="bline">{{ l }}<svg v-if="b.chev && b.lines.length > 1 && i === b.lines.length - 1" class="chev" width="8" height="6" viewBox="0 0 8 6"><path d="M1 1.500l3 3 3-3" fill="none" stroke="#666"/></svg></span>
            <span v-if="b.chev && b.lines.length === 1" class="bline"><svg class="chev solo" width="8" height="6" viewBox="0 0 8 6"><path d="M1 1.500l3 3 3-3" fill="none" stroke="#666"/></svg></span>
          </div>
        </div>
        <div class="glabel">{{ g.name }}</div>
      </div>
      <svg class="collapse" width="10" height="6" viewBox="0 0 10 6"><path d="M1 5l4-4 4 4" fill="none" stroke="#555"/></svg>
    </section>

    <main class="work">
      <aside class="thumbs">
        <span class="num">1</span>
        <div class="thumb">
          <svg width="207" height="116" viewBox="0 0 207 116">
            <path d="M66 21h55v61H66z" fill="#ffc000" stroke="#bf9000"/>
            <path d="M122 44L103 82l4-25z" fill="#cc9900"/>
            <path d="M121 44v38h-18z" fill="#4472c4"/>
          </svg>
        </div>
      </aside>
      <div class="canvas">
        <div class="slide">
          <svg class="shape" width="376" height="450" viewBox="700 290 376 450">
            <path d="M712 339h352v390H712z" fill="#ffc000" stroke="#666" stroke-width="1.500"/>
            <path d="M1064 617L973 639l-19 87z" fill="#cc9900"/>
            <path d="M1064 617v112H950z" fill="#4472c4"/>
            <path d="M1064 617v112H950M712 729h238" fill="none" stroke="#666" stroke-width="1.500"/>
            <path d="M888 314v25" stroke="#666" stroke-width="1.500"/>
            <path d="M896 311a10 10 0 1 1 2-9M892 308a6 6 0 1 1 1-5" fill="none" stroke="#7f7f7f" stroke-width="2"/>
            <path d="M893 305h10l-5 5z" fill="#7f7f7f"/>
            <g fill="#fff" stroke="#666" stroke-width="1.600">
              <circle cx="712" cy="339" r="4.700"/><circle cx="888" cy="339" r="4.700"/><circle cx="1064" cy="339" r="4.700"/>
              <circle cx="712" cy="533" r="4.700"/><circle cx="1064" cy="533" r="4.700"/>
              <circle cx="712" cy="729" r="4.700"/><circle cx="888" cy="729" r="4.700"/><circle cx="1064" cy="729" r="4.700"/>
            </g>
            <circle cx="950" cy="729" r="4.700" fill="#ffde00" stroke="#666" stroke-width="1.600"/>
          </svg>
        </div>
      </div>
      <aside class="pane">
        <div class="pane-title">设计工具</div>
        <div class="pane-tools">
          <svg width="18" height="16" viewBox="0 0 18 16"><path d="M5 1.500h8l4 6.500-4 6.500H5L1 8z" fill="none" stroke="#333" stroke-width="1.100"/><circle cx="9" cy="8" r="1.700" fill="none" stroke="#333"/></svg>
          <svg width="17" height="17" viewBox="0 0 17 17"><circle cx="8.500" cy="8.500" r="7.500" fill="none" stroke="#333" stroke-width="1.100"/><text x="5.500" y="12.500" font-size="11" fill="#333" font-family="Liberation Sans">?</text></svg>
          <svg width="12" height="12" viewBox="0 0 12 12"><path d="M2 2l8 8M10 2l-8 8" stroke="#333" stroke-width="1.100"/></svg>
        </div>
        <div class="pane-grid">
          <div v-for="i in 4" :key="i" class="pane-row" :class="'r' + i">
            <section v-for="(s, si) in [paneL[i - 1], paneR[i - 1]]" :key="si" class="pane-sec" :class="{ right: si === 1 }">
              <h4>{{ s.h }}</h4>
              <div class="pane-icons" :class="{ two: s.items.length <= 4 }">
                <div v-for="(it, k) in s.items" :key="k" class="picon" :class="{ hov: it[4] }">
                  <svg width="20" height="20" viewBox="0 0 20 20">
                    <path v-if="it[1]" :d="it[1]" :fill="it[0]"/>
                    <path v-if="it[2]" :d="it[2]" fill="none" :stroke="it[0]" stroke-width="1.100"/>
                    <path v-if="it[3]" :d="it[3]" fill="none" :stroke="it[0]" stroke-dasharray="1 1"/>
                  </svg>
                </div>
              </div>
            </section>
          </div>
          <section class="pane-full tbox">
            <h4>文本框</h4>
            <div class="opts">
              <label class="opt"><i class="radio checked"></i>自由调整</label>
              <label class="opt"><i class="radio"></i>根据文字</label>
              <label class="opt"><i class="radio"></i>溢出缩排</label>
              <label class="opt"><i class="check"><svg width="12" height="12" viewBox="0 0 12 12"><path d="M2.500 6l2.500 2.500 4.500-5" fill="none" stroke="#fff" stroke-width="1.200"/></svg></i>自动换行</label>
            </div>
          </section>
          <section class="pane-full tmargin">
            <div class="mhead">
              <h4>文本框边距</h4>
              <svg width="16" height="16" viewBox="0 0 16 16"><path d="M1 3h14M5 3V1h6v2M2.500 3v12h11V3M6 6v6M8 6v6M10 6v6" fill="none" stroke="#f7787f"/></svg>
              <svg width="14" height="14" viewBox="0 0 14 14"><path d="M12 7a5.500 5.500 0 1 1-2-4.300M12.500 1v3.500H9" fill="none" stroke="#f7787f"/></svg>
            </div>
            <div class="mgrid">
              <div v-for="(m, i) in margins" :key="i" class="mcell">
                <svg width="18" height="18" viewBox="0 0 20 20"><path :d="m.d" fill="none" :stroke="m.c"/></svg>
                <div class="minput">
                  <span>{{ m.v }}</span>
                  <i class="spin"></i>
                </div>
              </div>
            </div>
          </section>
        </div>
        <div class="pscroll"><i></i></div>
      </aside>
    </main>

    <footer class="status">
      <span class="st a">幻灯片 第 1 张，共 1 张</span>
      <svg class="st-ic" width="14" height="14" viewBox="0 0 14 14"><path d="M7 2.500H1v10h6zM7 2.500h6v10H7M9 6l1.500 2L13 4" fill="none" stroke="#777"/></svg>
      <span class="st b">中文(中国)</span>
      <svg class="st-ic c" width="14" height="14" viewBox="0 0 14 14"><path d="M6 1a6 6 0 1 0 6 6M7 7l6 6M13 7l-6 6" fill="none" stroke="#444" stroke-width="1.200"/></svg>
      <span class="st d">辅助功能: 调查</span>
      <div class="st-right">
        <svg width="12" height="12" viewBox="0 0 12 12"><path d="M0 6.500h12M1 9h10M2 11.500h8M6 1L3 4h6z" fill="none" stroke="#555"/></svg>
        <span class="st note">备注</span>
        <svg class="cmt" width="15" height="14" viewBox="0 0 15 14"><path d="M2 0h11q2 0 2 2v6q0 2-2 2H8l-4 4v-4H2q-2 0-2-2V2q0-2 2-2z" fill="#595959"/></svg>
        <span class="st note n2">批注</span>
        <div class="view active"><svg width="15" height="14" viewBox="0 0 15 14"><path d="M.5.500h14v13H.5zM3.500.500v13M6 3h6v4H6zM6 10h6" fill="none" stroke="#666"/></svg></div>
        <div class="view"><svg width="15" height="14" viewBox="0 0 15 14"><path d="M.5.500h5v5h-5zM9.500.500h5v5h-5zM.5 8.500h5v5h-5zM9.500 8.500h5v5h-5z" fill="none" stroke="#666"/></svg></div>
        <div class="view"><svg width="15" height="14" viewBox="0 0 15 14"><path d="M7.500 2L1 .5v11.500l6.500 1.500 6.500-1.500V.5zM7.500 2v11.500M3 4l3 .5M3 6.500l3 .5M3 9l3 .5M9 4.500l3-.5M9 7l3-.5M9 9.500l3-.5" fill="none" stroke="#666"/></svg></div>
        <div class="view"><svg width="15" height="14" viewBox="0 0 15 14"><path d="M.5 1h14M2 1v7h11V1M7.500 8v4M4.500 13h6" fill="none" stroke="#666"/></svg></div>
        <span class="zm minus"></span>
        <div class="slider"><i></i></div>
        <span class="zm plus"></span>
        <span class="st pct">104%</span>
        <svg class="fit" width="14" height="14" viewBox="0 0 14 14"><path d="M.5.500h13v13H.5zM4 3.500v2M3 4.500h2M10 3.500v2M9 4.500h2M4 8.500v2M3 9.500h2M10 8.500v2M9 9.500h2" fill="none" stroke="#666"/></svg>
      </div>
    </footer>

    <!-- dropdown gallery from the 形状 button -->
    <div class="gallery">
      <template v-for="s in sec" :key="s.h">
        <div class="ghead">{{ s.h }}</div>
        <div class="gicons">
          <svg v-for="(it, i) in s.items" :key="i" width="20" height="20" viewBox="0 0 20 20">
            <path :d="it.d" fill="none" stroke="#757575" :stroke-dasharray="it.dash ? '1 .6' : null"/>
            <path v-if="it.e" :d="it.e" fill="none" stroke="#757575" stroke-dasharray="1 1"/>
            <text v-if="it.t" :x="it.tx || 10" :y="it.ty || (it.big ? 15 : 12.5)" text-anchor="middle" :font-size="it.big ? 13 : (it.tx ? 7 : 6.5)" :font-weight="it.big ? 700 : 400" :fill="it.c || '#666'" font-family="Liberation Sans">{{ it.t }}</text>
          </svg>
        </div>
      </template>
      <svg class="grip" width="8" height="8" viewBox="0 0 8 8"><path d="M6 0h2v2H6zM3 3h2v2H3zM6 3h2v2H6zM0 6h2v2H0zM3 6h2v2H3zM6 6h2v2H6z" fill="#aaa"/></svg>
    </div>

    <!-- hand-drawn annotations on top of the screenshot -->
    <div class="ring big"></div>
    <div class="ring small"></div>
    <svg class="arrow" width="300" height="240" viewBox="0 0 900 720">
      <defs>
        <linearGradient id="hu" x1="0" y1="0" x2="1" y2="0.6"><stop offset="0" stop-color="#b00000"/><stop offset=".6" stop-color="#d80a06"/><stop offset="1" stop-color="#ff150c"/></linearGradient>
        <linearGradient id="hl" x1="0" y1="0" x2="1" y2="0.3"><stop offset="0" stop-color="#6e0000"/><stop offset=".35" stop-color="#c00a05"/><stop offset=".85" stop-color="#f5140a"/><stop offset="1" stop-color="#fc1a0c"/></linearGradient>
        <linearGradient id="su" x1="0" y1="0" x2="1" y2="0.5"><stop offset="0" stop-color="#f3341a"/><stop offset="1" stop-color="#cf0f05"/></linearGradient>
        <linearGradient id="sl" x1="0" y1="0" x2="1" y2="0.5"><stop offset="0" stop-color="#f6301a"/><stop offset="1" stop-color="#a80c04"/></linearGradient>
        <linearGradient id="bk" x1="0" y1="1" x2="1" y2="0"><stop offset="0" stop-color="#9c0000"/><stop offset=".35" stop-color="#ff1712"/><stop offset=".55" stop-color="#e8494c"/><stop offset=".75" stop-color="#cc0000"/><stop offset="1" stop-color="#7a0000"/></linearGradient>
        <linearGradient id="bb" x1="0" y1="0" x2="1" y2="0"><stop offset="0" stop-color="#d01818"/><stop offset=".4" stop-color="#f5b0b0"/><stop offset="1" stop-color="#c40d0d"/></linearGradient>
      </defs>
      <path d="M448 50l19 18-55 107-35-10z" fill="url(#bb)"/>
      <path d="M248 428l32 17-48 117-32-2z" fill="url(#bb)"/>
      <path d="M40 170L448 50 377 165l120 47-82 133z" fill="url(#hu)"/>
      <path d="M40 170l375 175-75 132-92-49-48 132z" fill="url(#hl)"/>
      <path d="M497 212l323 123-130 125-275-115z" fill="url(#su)"/>
      <path d="M415 345l275 115-30 180 37 53-357-216z" fill="url(#sl)"/>
      <path d="M820 335l43 17-103 78-35 50-20 110-8 103-37-53 12-120 18-60z" fill="url(#bk)"/>
    </svg>

    <!-- site watermark -->
    <div class="wm">
      <svg class="paw" width="85" height="100" viewBox="0 0 100 115">
        <g fill="rgba(255,255,255,.75)" stroke="rgba(120,120,120,.35)" stroke-width="3">
          <ellipse cx="18" cy="42" rx="13" ry="19"/>
          <ellipse cx="42" cy="19" rx="13" ry="18"/>
          <ellipse cx="70" cy="22" rx="13" ry="18"/>
          <ellipse cx="88" cy="50" rx="11" ry="16"/>
          <path d="M50 52c-14 0-18 12-26 20-10 10-12 38 12 38 8 0 10-3 16-3s10 3 18 3c22 0 20-26 10-38-8-8-16-20-30-20z"/>
        </g>
      </svg>
      <span class="baidu">Baidu</span>
      <span class="jy">经验</span>
      <span class="url">jingyan.baidu.com</span>
    </div>
  </div>
</template>

<style scoped>
.app { position: relative; width: 1920px; height: 1033px; overflow: hidden; display: flex; flex-direction: column; background: #e6e6e6; font-family: "Noto Sans CJK SC", "Liberation Sans", sans-serif; font-size: 12px; color: #444; }
.titlebar { position: relative; height: 34px; flex: none; background: #b7472a; display: flex; align-items: center; color: #fff; }
.deco { position: absolute; left: 1460px; top: 0; }
.qat { width: 793px; height: 34px; display: flex; align-items: center; position: relative; }
.q1 { margin-left: 21px; }
.q2 { margin-left: 12px; }
.q3 { margin-left: 20px; }
.q4 { margin-left: 14px; }
.q5 { margin-left: 13px; }
.qmore { width: 5px; height: 2px; margin-left: 14px; border-top: 1px solid #fff; border-bottom: 2px solid #fff; }
.ctx { width: 72px; height: 34px; line-height: 30px; text-align: center; background: #983c23; color: #f3d9d1; }
.doc { margin: -4px 0 0 23px; position: relative; font-size: 12.5px; }
.user { position: absolute; left: 1661px; top: 7px; line-height: 16px; }
.avatar { position: absolute; left: 1701px; top: 3px; }
.winbtn { position: absolute; top: 8px; }
.w1 { left: 1751px; }
.w2 { left: 1798px; }
.w3 { left: 1844px; }
.w4 { left: 1890px; }
.tabs { position: relative; height: 30px; flex: none; background: #b7472a; display: flex; align-items: center; color: #fff; padding-left: 3px; }
.tab { padding: 0 13.5px; line-height: 28px; height: 30px; white-space: nowrap; }
.tab.first { padding: 0 14px; margin-right: 5px; }
.tab.active { background: #f3f3f3; color: #b7472a; }
.tab.ctxtab { background: #983c23; margin-left: 3px; padding: 0 12px; }
.bulb { margin-left: 16px; }
.tell { margin: -2px 0 0 13px; }
.share { position: absolute; right: 22px; top: -1px; line-height: 30px; display: flex; align-items: center; gap: 3px; }
.ribbon { position: relative; height: 94px; flex: none; box-sizing: border-box; background: #f3f3f3; border-bottom: 2px solid #d2d2d2; display: flex; padding-top: 3px; }
.group { position: relative; box-sizing: border-box; height: 87px; border-right: 1px solid #c6c6c6; flex: none; }
.btns { display: flex; height: 72px; }
.btn { flex: none; height: 63px; display: flex; flex-direction: column; align-items: center; white-space: nowrap; color: #444; }
.btn.on { background: #c6c6c6; }
.btn.off { color: #a6a6a6; }
.bicon { margin: 3px 0 2px; flex: none; overflow: visible; }
.bline { height: 15px; line-height: 15px; display: block; position: relative; }
.chev { margin-left: 3px; vertical-align: 1px; }
.chev.solo { margin: 0; }
.glabel { text-align: center; line-height: 16px; height: 15px; color: #444; }
.addins { height: 72px; display: flex; flex-direction: column; padding: 10px 0 0 10px; box-sizing: border-box; gap: 13px; }
.addin { display: flex; align-items: center; gap: 3px; height: 18px; white-space: nowrap; }
.collapse { position: absolute; right: 8px; bottom: 2px; }
.work { flex: 1; display: flex; min-height: 0; }
.thumbs { position: relative; width: 266px; flex: none; box-sizing: border-box; border-right: 1px solid #c8c8c8; margin-top: 3px; }
.num { position: absolute; left: 14px; top: 10px; color: #c8563a; font-size: 14px; font-family: "Liberation Sans", sans-serif; }
.thumb { position: absolute; left: 34px; top: 14px; box-sizing: border-box; width: 213px; height: 122px; border: 3px solid #b7472a; background: #fff; }
.thumb svg { display: block; }
.canvas { flex: 1; padding: 52px 0 0 23px; min-width: 0; }
.slide { position: relative; box-sizing: border-box; width: 1322px; height: 744px; background: #fff; border: 1px solid #c8c8c8; }
.shape { position: absolute; left: 409px; top: 79px; }
.pane { position: relative; width: 270px; flex: none; box-sizing: border-box; background: #fff; border-left: 1px solid #c8c8c8; }
.pane-title { height: 36px; line-height: 34px; padding-left: 9px; font-size: 13px; color: #333; }
.pane-tools { height: 28px; display: flex; align-items: center; padding-left: 159px; gap: 19px; }
.pane-tools svg:nth-child(3) { margin-left: 3px; }
.pane-grid { margin-left: 4px; width: 260px; border-right: 1px solid #e2e2e2; }
.pane-row { display: flex; border-top: 1px solid #e6e6e6; height: 132px; box-sizing: border-box; }
.pane-row.r4 { height: 104px; }
.pane-sec { width: 129px; box-sizing: border-box; padding: 16px 0 0 8px; border-right: 1px solid #e0e0e0; }
.pane-sec.right { width: 130px; padding-left: 9px; border-right: none; }
h4 { margin: 0 0 0 8px; font-weight: 400; font-size: 12px; line-height: 16px; color: #777; }
.pane-icons { display: grid; grid-template-columns: repeat(3, 36px); grid-auto-rows: 28px; margin-top: 4px; }
.pane-icons.two { grid-template-columns: repeat(2, 36px); }
.picon { display: flex; align-items: center; justify-content: center; }
.picon svg { display: block; }
.picon.hov svg { background: #f5f5f5; border-radius: 3px; }
.pane-full { border-top: 1px solid #e6e6e6; box-sizing: border-box; padding: 17px 0 0 8px; }
.tbox { height: 96px; }
.opts { display: grid; grid-template-columns: 118px 100px; grid-auto-rows: 24px; margin: 2px 0 0 8px; }
.opt { display: flex; align-items: center; color: #333; font-size: 11.5px; gap: 4px; }
.radio { width: 16px; height: 16px; border-radius: 50%; border: 1px solid #ddd; box-sizing: border-box; background: #fff; display: block; }
.radio.checked { background: #fff; border: 5px solid #f7442f; }
.check { width: 16px; height: 16px; border-radius: 2px; background: #f5433f; display: flex; align-items: center; justify-content: center; }
.tmargin { height: 132px; border-bottom: 1px solid #e2e2e2; }
.mhead { display: flex; align-items: center; padding-right: 17px; }
.mhead h4 { flex: 1; }
.mhead svg + svg { margin-left: 13px; }
.mgrid { display: grid; grid-template-columns: 118px 110px; grid-auto-rows: 34px; margin: 10px 0 0 8px; }
.mcell { display: flex; align-items: center; height: 26px; }
.mcell svg { flex: none; width: 18px; margin-right: 2px; }
.minput { position: relative; width: 90px; height: 26px; box-sizing: border-box; border: 1px solid #ddd; line-height: 24px; padding-left: 6px; font-size: 12.5px; color: #111; background: #fff; font-family: "Liberation Sans", sans-serif; }
.spin { position: absolute; right: 5px; top: 5px; width: 0; height: 0; border-left: 4px solid transparent; border-right: 4px solid transparent; border-bottom: 4px solid #111; }
.spin::after { content: ""; position: absolute; left: -4px; top: 9px; border-left: 4px solid transparent; border-right: 4px solid transparent; border-top: 4px solid #111; }
.pscroll { position: absolute; right: 0; top: 720px; width: 7px; height: 50px; box-sizing: border-box; border: 2px solid #8c8c8c; border-radius: 4px; background: #fff; padding-top: 15px; }
.pscroll i { display: block; height: 30px; background: #ed7d31; }
.status { position: relative; height: 23px; flex: none; box-sizing: border-box; background: #f2f2f2; border-top: 1px solid #c8c8c8; display: flex; align-items: center; font-size: 12px; color: #444; }
.st { white-space: nowrap; }
.st.a { margin-left: 7px; word-spacing: 2px; }
.st-ic { margin-left: 19px; }
.st.b { margin-left: 18px; }
.st-ic.c { margin-left: 18px; }
.st.d { margin-left: 5px; }
.st-right { margin-left: auto; height: 22px; display: flex; align-items: center; }
.st.note { margin-left: 4px; width: 24px; }
.st.note.n2 { margin-left: 2px; }
.cmt { margin-left: 20px; }
.view { width: 40px; height: 22px; display: flex; align-items: center; justify-content: center; }
.view.active { background: #c6c6c6; margin-left: 19px; }
.zm { position: relative; width: 9px; height: 1px; background: #444; margin: 0 5px; }
.zm.plus { margin: 0 0 0 4px; }
.zm.plus::after { content: ""; position: absolute; left: 4px; top: -4px; width: 1px; height: 9px; background: #444; }
.slider { position: relative; width: 100px; height: 1px; background: #444; }
.slider i { position: absolute; left: 49px; top: -5px; width: 5px; height: 11px; background: #666; }
.st.pct { margin-left: 14px; width: 31px; font-size: 12.5px; }
.fit { margin: 0 6px 0 12px; }
.gallery { position: absolute; left: 289px; top: 136px; width: 259px; height: 653px; box-sizing: border-box; background: #fff; border: 1px solid #c6c6c6; border-radius: 3px; box-shadow: 2px 3px 6px rgba(0, 0, 0, .18); padding: 1px 0 0 0; }
.ghead { width: 240px; height: 24px; line-height: 24px; padding-left: 9px; box-sizing: border-box; background: #e9e9e9; color: #6e6e6e; font-weight: 500; }
.gicons { width: 240px; display: flex; flex-wrap: wrap; }
.gicons svg { display: block; flex: none; }
.grip { position: absolute; right: 3px; bottom: 3px; }
.ring { position: absolute; box-sizing: border-box; border: 11px solid #ed1c24; }
.ring.big { left: 273px; top: 23px; width: 75px; height: 117px; border-radius: 26px; }
.ring.small { left: 319px; top: 302px; width: 44px; height: 46px; border-width: 10px; border-radius: 16px; }
.arrow { position: absolute; left: 350px; top: 290px; }
.wm { position: absolute; inset: 0; pointer-events: none; font-family: "Liberation Sans", sans-serif; }
.paw { position: absolute; left: 1602px; top: 829px; }
.wm span { position: absolute; white-space: nowrap; color: rgba(255, 255, 255, .72); -webkit-text-stroke: 1.5px rgba(120, 120, 120, .32); }
.baidu { left: 1473px; top: 868px; font-size: 70px; line-height: 88px; font-weight: 700; }
.jy { left: 1696px; top: 866px; font-size: 58px; line-height: 80px; font-family: "Noto Sans CJK SC", sans-serif; font-weight: 700; }
.url { left: 1474px; top: 944px; font-size: 38.5px; line-height: 48px; font-weight: 700; }
</style>

<style>
body { margin: 0; }
</style>
